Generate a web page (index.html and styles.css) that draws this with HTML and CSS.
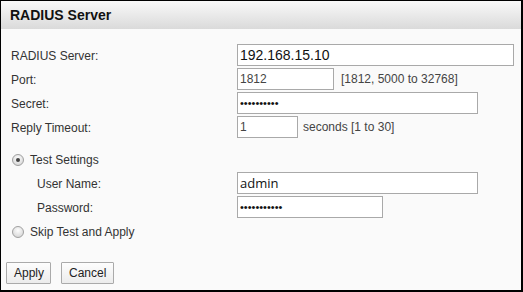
FILE: index.html
```html
<!DOCTYPE html>
<html>
<head>
<meta charset="utf-8">
<link rel="stylesheet" href="styles.css">
</head>
<body>
<div class="panel">
  <div class="header">RADIUS Server</div>
  <div class="content">
    <div class="grid">
      <label class="lbl">RADIUS Server:</label>
      <div class="field"><input class="inp w277 ip" type="text" value="192.168.15.10"></div>
      <label class="lbl">Port:</label>
      <div class="field"><input class="inp w97" type="text" value="1812"><span class="hint hint-port">[1812, 5000 to 32768]</span></div>
      <label class="lbl">Secret:</label>
      <div class="field"><input class="inp w240" type="password" value="abcdefghij"></div>
      <label class="lbl">Reply Timeout:</label>
      <div class="field"><input class="inp w60" type="text" value="1"><span class="hint hint-sec">seconds [1 to 30]</span></div>
    </div>
    <div class="radio-row first"><span class="radio checked"></span><span class="rtext">Test Settings</span></div>
    <div class="grid sub">
      <label class="lbl">User Name:</label>
      <div class="field"><input class="inp w240 user" type="text" value="admin"></div>
      <label class="lbl">Password:</label>
      <div class="field"><input class="inp w146" type="password" value="abcdefghijk"></div>
    </div>
    <div class="radio-row"><span class="radio"></span><span class="rtext">Skip Test and Apply</span></div>
    <div class="buttons">
      <button class="btn apply">Apply</button>
      <button class="btn cancel">Cancel</button>
    </div>
  </div>
</div>
</body>
</html>
```
FILE: styles.css
```css
* { box-sizing: border-box; }
html, body { margin: 0; padding: 0; background: #fff; }
body { font-family: "Liberation Sans", Arial, sans-serif; font-size: 12px; color: #333; }
.panel {
  width: 523px;
  height: 292px;
  border-style: solid;
  border-color: #000;
  border-width: 1px 2px 2px 1px;
  background: #fafafa;
  display: flex;
  flex-direction: column;
}
.header {
  height: 28px;
  line-height: 28px;
  padding-left: 9px;
  font-weight: bold;
  font-size: 14px;
  color: #111;
  background: linear-gradient(#f9f9f9, #dadada);
}
.content {
  padding: 15px 0 0 0;
  display: flex;
  flex-direction: column;
}
.grid {
  display: grid;
  grid-template-columns: 226px auto;
  grid-auto-rows: 24px;
  padding-left: 10px;
}
.grid.sub { padding-left: 36px; grid-template-columns: 200px auto; }
.lbl { display: flex; align-items: center; color: #333; }
.field { display: flex; align-items: flex-start; }
.inp {
  height: 22px;
  border: 1px solid #a9a9a9;
  background: #fff;
  padding: 0 2px;
  margin: 0;
  font-family: "Liberation Sans", Arial, sans-serif;
  font-size: 12px;
  color: #444;
  outline: none;
}
.inp.ip { font-size: 14px; color: #111; }
.inp.user { font-family: "Open Sans", sans-serif; font-size: 13px; color: #111; }
.inp[type=password] { color: #111; font-size: 11px; letter-spacing: 0; }
.w277 { width: 277px; }
.w97 { width: 97px; }
.w240 { width: 241px; }
.w60 { width: 61px; }
.w146 { width: 146px; }
.hint { line-height: 22px; color: #444; }
.hint-port { margin-left: 7px; }
.hint-sec { margin-left: 5px; }
.radio-row {
  height: 24px;
  display: flex;
  align-items: center;
  padding-left: 11px;
}
.radio-row.first { margin-top: 8px; }
.radio {
  width: 12px;
  height: 12px;
  border-radius: 50%;
  border: 1px solid #a0a0a0;
  background: radial-gradient(circle at 50% 35%, #fdfdfd, #cfcfcf);
  display: flex;
  align-items: center;
  justify-content: center;
}
.radio.checked::after {
  content: "";
  width: 4px;
  height: 4px;
  border-radius: 50%;
  background: #444;
}
.rtext { margin-left: 6px; color: #333; }
.buttons {
  display: flex;
  gap: 10px;
  padding-left: 5px;
  margin-top: 18px;
}
.btn {
  height: 22px;
  padding: 0 7px;
  border: 1px solid #aaa;
  background: linear-gradient(#fdfdfd, #ececec);
  font-family: "Liberation Sans", Arial, sans-serif;
  font-size: 12px;
  color: #222;
  border-radius: 1px;
}
.apply { width: 45px; }
.cancel { width: 53px; }
```
